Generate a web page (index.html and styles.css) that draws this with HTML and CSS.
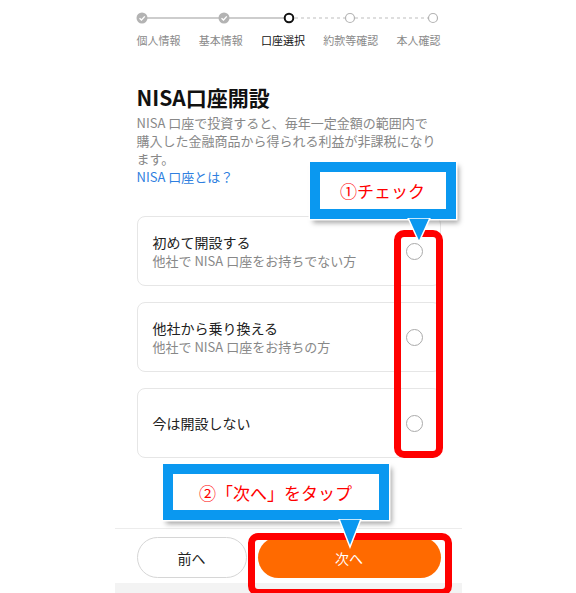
FILE: index.html
```html
<!DOCTYPE html>
<html>

<head>
    <meta charset="utf-8">
    <meta name="viewport" content="width=device-width, initial-scale=1">
    <title>NISA口座開設</title>
    <link rel="stylesheet" href="styles.css">
</head>

<body>
    <div class="screen">
        <svg class="track" width="347" height="20" viewBox="0 0 347 20">
            <line x1="27" y1="10" x2="174" y2="10" stroke="#bdbdbd" stroke-width="1.5" />
            <line x1="174" y1="10" x2="318" y2="10" stroke="#bdbdbd" stroke-width="1.2" stroke-dasharray="3 3" />
            <circle cx="27" cy="10" r="5.5" fill="#b3b3b3" />
            <path d="M24.5 10.2 L26.5 12 L29.8 8.4" fill="none" stroke="#fff" stroke-width="1.4" />
            <circle cx="109" cy="10" r="5.5" fill="#b3b3b3" />
            <path d="M106.5 10.2 L108.5 12 L111.8 8.4" fill="none" stroke="#fff" stroke-width="1.4" />
            <circle cx="174" cy="10" r="4.3" fill="#fff" stroke="#111" stroke-width="2" />
            <circle cx="235" cy="10" r="4.5" fill="#fff" stroke="#b3b3b3" stroke-width="1.2" />
            <circle cx="318" cy="10" r="4.5" fill="#fff" stroke="#b3b3b3" stroke-width="1.2" />
        </svg>
        <div class="steps">
            <span>個人情報</span>
            <span>基本情報</span>
            <span class="current">口座選択</span>
            <span>約款等確認</span>
            <span>本人確認</span>
        </div>

        <div class="content">
            <h1 class="title">NISA口座開設</h1>
            <p class="desc">NISA 口座で投資すると、毎年一定金額の範囲内で購入した金融商品から得られる利益が非課税になります。</p>
            <a class="link" href="#">NISA 口座とは？</a>

            <div class="options">
                <label class="option">
                    <div class="option-text">
                        <div class="option-title">初めて開設する</div>
                        <div class="option-sub">他社で NISA 口座をお持ちでない方</div>
                    </div>
                    <span class="radio"></span>
                </label>
                <label class="option">
                    <div class="option-text">
                        <div class="option-title">他社から乗り換える</div>
                        <div class="option-sub">他社で NISA 口座をお持ちの方</div>
                    </div>
                    <span class="radio"></span>
                </label>
                <label class="option">
                    <div class="option-text">
                        <div class="option-title">今は開設しない</div>
                    </div>
                    <span class="radio"></span>
                </label>
            </div>
        </div>

        <div class="footer">
            <button class="btn btn-back">前へ</button>
            <button class="btn btn-next">次へ</button>
        </div>
        <div class="bottom-strip"></div>

        <!-- annotation overlays -->
        <div class="mark mark-radios"></div>
        <div class="mark mark-next"></div>

        <div class="callout callout-check">①チェック</div>
        <svg class="tail tail-check" width="24" height="26" viewBox="0 0 24 26">
            <path d="M1 0 L12 24 L23 0 Z" fill="#0a98f0" stroke="#fff" stroke-width="1.5" />
        </svg>
        <div class="callout callout-tap">②「次へ」をタップ</div>
        <svg class="tail tail-tap" width="24" height="30" viewBox="0 0 24 30">
            <path d="M1 0 L12 28 L23 0 Z" fill="#0a98f0" stroke="#fff" stroke-width="1.5" />
        </svg>
    </div>
</body>

</html>
```

FILE: styles.css
```css
body {
    margin: 0;
    background-color: #ffffff;
    font-family: "Noto Sans CJK JP", "Noto Sans", sans-serif;
    color: #222;
}

.screen {
    position: relative;
    width: 347px;
    height: 593px;
    margin: 0 auto;
    background-color: #ffffff;
}

.track {
    display: block;
    margin-top: 8px;
}

.steps {
    display: flex;
    justify-content: space-between;
    padding: 0 21px 0 22px;
    margin-top: 4px;
    font-size: 11px;
    line-height: 16px;
    color: #8a8a8a;
}

.steps .current {
    color: #111;
}

.content {
    padding: 0 21px 0 22px;
}

.title {
    margin: 35px 0 0;
    font-size: 21px;
    line-height: 28px;
    font-weight: bold;
    color: #111;
}

.desc {
    margin: 3px 0 0;
    font-size: 13px;
    line-height: 18px;
    color: #888;
}

.link {
    display: block;
    font-size: 13px;
    line-height: 18px;
    color: #2f7fe0;
    text-decoration: none;
}

.options {
    display: flex;
    flex-direction: column;
    gap: 16px;
    margin-top: 30px;
}

.option {
    display: flex;
    align-items: center;
    justify-content: space-between;
    height: 68px;
    padding: 0 17px 0 15px;
    border: 1px solid #e6e6e6;
    border-radius: 8px;
}

.option-title {
    font-size: 14px;
    line-height: 20px;
    color: #222;
}

.option-sub {
    font-size: 13px;
    line-height: 18px;
    color: #888;
}

.radio {
    width: 15px;
    height: 15px;
    border: 1.3px solid #aaa;
    border-radius: 50%;
}

.footer {
    display: flex;
    gap: 11px;
    margin-top: 70px;
    padding: 8px 21px 5px 22px;
    border-top: 1px solid #ececec;
}

.btn {
    height: 41px;
    border-radius: 21px;
    font-family: inherit;
    font-size: 14px;
}

.btn-back {
    width: 110px;
    background-color: #fff;
    border: 1px solid #d6d6d6;
    color: #222;
}

.btn-next {
    flex: 1;
    background-color: #ff6a00;
    border: none;
    color: #fff;
}

.bottom-strip {
    height: 12px;
    background-color: #f3f3f3;
}

/* annotations */
.mark {
    position: absolute;
    border: 7px solid #ff0000;
    border-radius: 10px;
    box-sizing: border-box;
}

.mark-radios {
    left: 279px;
    top: 222px;
    width: 49px;
    height: 228px;
}

.mark-next {
    left: 133px;
    top: 525px;
    width: 204px;
    height: 63px;
}

.callout {
    position: absolute;
    box-sizing: border-box;
    display: flex;
    align-items: center;
    justify-content: center;
    border: 10px solid #0a98f0;
    background-color: #fff;
    color: #ff0000;
    font-size: 17px;
    box-shadow: 0 0 0 1.5px #fff, 3px 4px 5px rgba(0, 0, 0, 0.35);
}

.callout-check {
    left: 195px;
    top: 154px;
    width: 146px;
    height: 57px;
}

.callout-tap {
    left: 48px;
    top: 456px;
    width: 226px;
    height: 56px;
}

.tail {
    position: absolute;
}

.tail-check {
    left: 292px;
    top: 210px;
}

.tail-tap {
    left: 223px;
    top: 511px;
}
```
